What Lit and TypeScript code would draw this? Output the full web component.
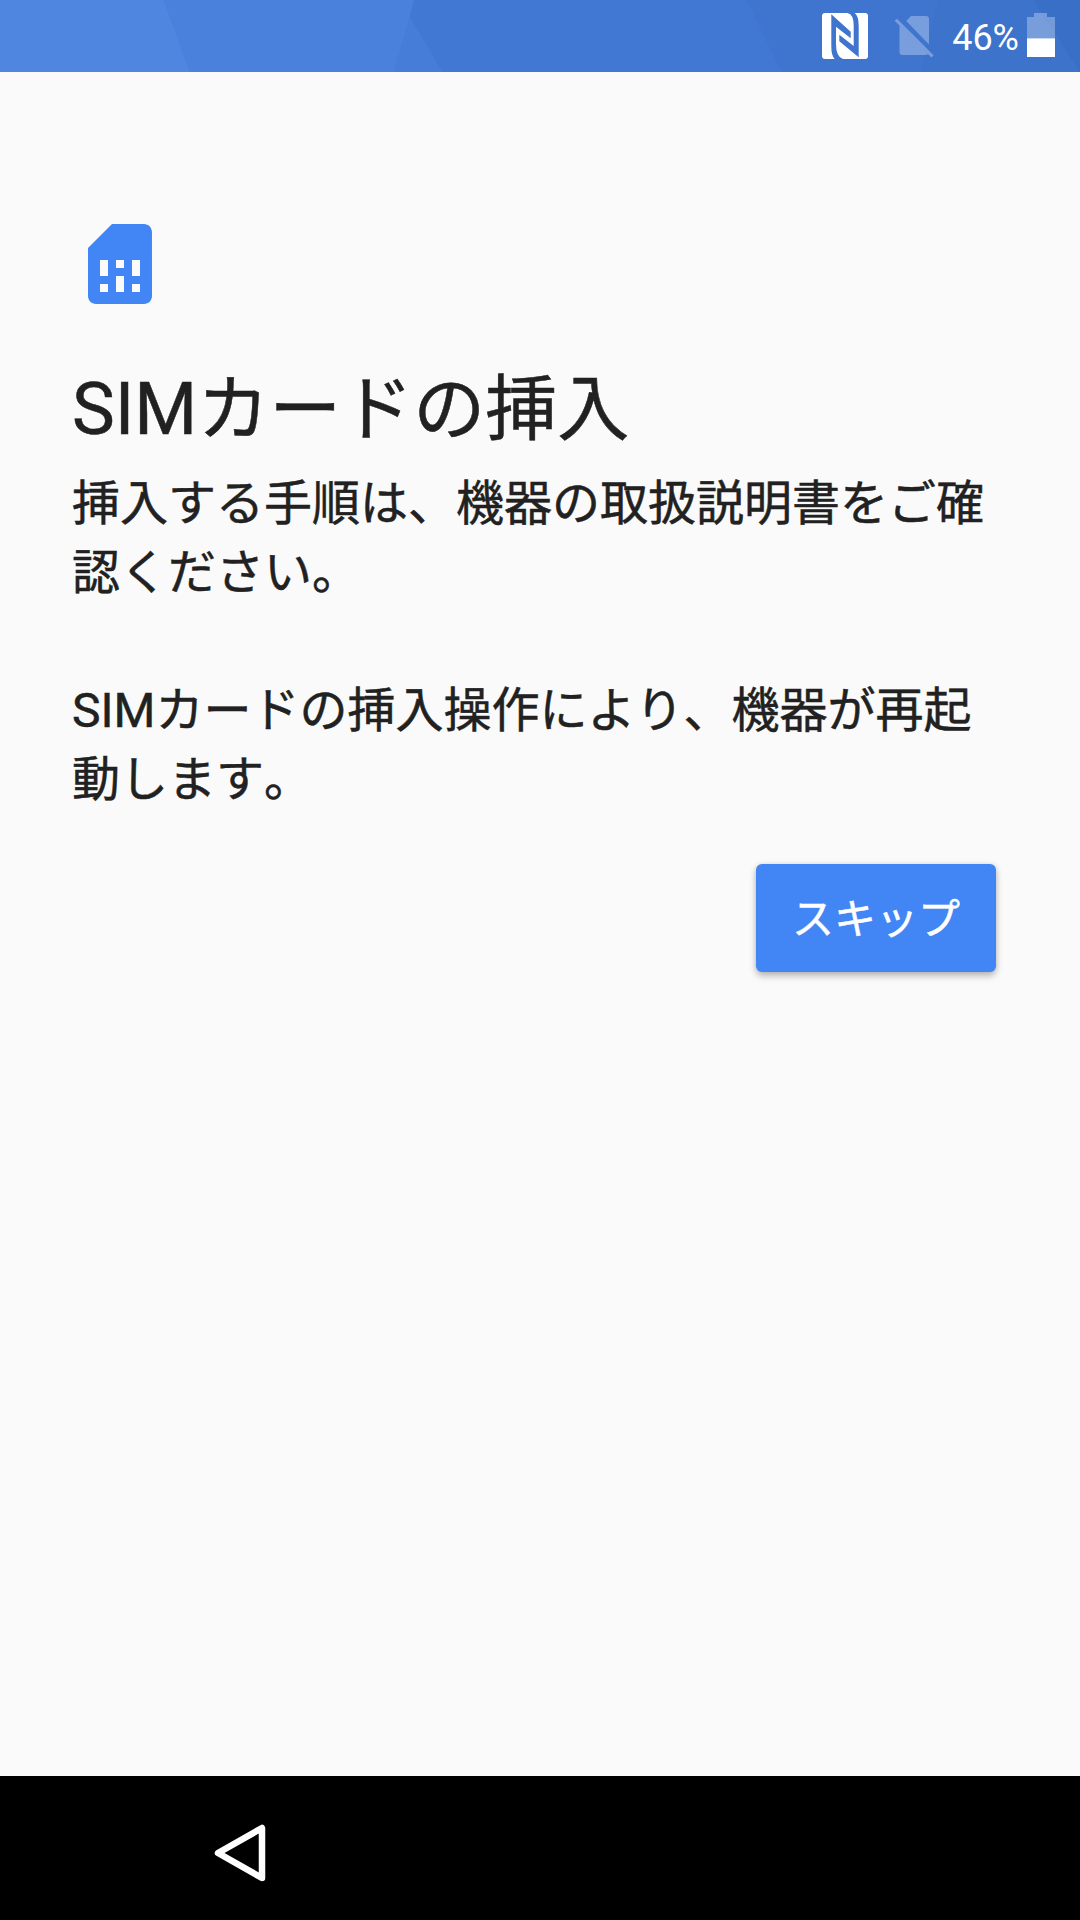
import { LitElement, html, css } from "lit";
import { customElement, property } from "lit/decorators.js";

@customElement("status-bar")
class StatusBar extends LitElement {
  @property() battery = "46%";

  static styles = css`
    :host { display: block; }
    .bar {
      position: relative;
      height: 72px;
      overflow: hidden;
      background: #4f86e0;
    }
    .backdrop { position: absolute; inset: 0; display: block; }
    .tray {
      position: relative;
      display: flex;
      justify-content: flex-end;
      height: 72px;
      padding-right: 25px;
    }
    .tray svg { display: block; flex: none; }
    .nfc { margin-right: 26px; }
    .sim { margin-right: 18px; }
    .level {
      font: 36px/72px Roboto, sans-serif;
      color: #fff;
      margin: 2px 8px 0 0;
    }
  `;

  render() {
    return html`
      <div class="bar">
        <svg class="backdrop" width="1080" height="72" viewBox="0 0 1080 72">
          <path fill="#4a81dc" d="M163.5 0H1080V72H189.500z" />
          <path fill="#467dd9" d="M414 0H1080V72H394z" />
          <path fill="#4178d3" d="M414 0H1080V72H442.500L410 17z" />
          <path fill="#3f75cf" d="M746.500 0H1080V72H782z" />
          <path fill="#3d73cb" d="M938.500 0H1080V72H920z" />
          <path fill="#396fc6" d="M1033 0H1080V72z" />
        </svg>
        <div class="tray">
          <svg class="nfc" width="46" height="72" viewBox="0 0 46 72">
            <rect y="13" width="46" height="46" rx="3" fill="#fff" />
            <path fill="#3f75cf" d="M9.300 14.300L28.700 31.700V38.300L14 26.700V44Q14 57 21 59H12.700Q9.300 56 9.300 46zM36.700 57.300L17.300 41.300V34.700L31.700 46V26Q31.700 14 25.500 13H32.700Q36.700 16 36.700 26z" />
          </svg>
          <svg class="sim" width="40" height="72" viewBox="0 0 40 72" fill="#fff" fill-opacity=".3">
            <path d="M12.300 21L17 16H32Q35 16 35 19V44.500z" />
            <path d="M3 18.700L39.700 55.300L37.300 57.600L34 54.300Q33 55 31 55H8.500Q5.500 55 5.500 52V25.600L.600 20.800z" />
          </svg>
          <span class="level">${this.battery}</span>
          <svg width="28" height="72" viewBox="0 0 28 72">
            <path fill="#fff" fill-opacity=".3" d="M0 17H7V13H20V17H28V38.300H0z" />
            <path fill="#fff" d="M0 38.300H28V57H0z" />
          </svg>
        </div>
      </div>
    `;
  }
}

@customElement("nav-bar")
class NavBar extends LitElement {
  static styles = css`
    :host { display: block; }
    .bar {
      display: flex;
      align-items: center;
      height: 144px;
      padding-left: 204px;
      padding-top: 10px;
      box-sizing: border-box;
      background: #000;
    }
    svg { display: block; }
  `;

  render() {
    return html`
      <div class="bar">
        <svg width="72" height="72" viewBox="0 0 72 72">
          <path d="M14 36L58 11V61z" fill="none" stroke="#fff" stroke-width="6.500" stroke-linejoin="round" />
        </svg>
      </div>
    `;
  }
}

@customElement("app-root")
class AppRoot extends LitElement {
  static styles = css`
    :host { display: block; }
    .screen {
      display: flex;
      flex-direction: column;
      width: 1080px;
      height: 1920px;
      overflow: hidden;
      background: #fafafa;
      color: #212121;
      font-family: Roboto, "Noto Sans CJK JP", sans-serif;
      font-kerning: none;
      -webkit-text-stroke: 0.5px currentColor;
    }
    status-bar { -webkit-text-stroke: 0; }
    .content {
      flex: 1;
      display: flex;
      flex-direction: column;
      padding: 144px 84px 0 72px;
    }
    .icon { display: block; }
    .title {
      margin: 46px 0 0;
      font-size: 72px;
      font-weight: 400;
      line-height: 104px;
      white-space: nowrap;
    }
    .body {
      margin: 7px 0 0;
      font-size: 48px;
      line-height: 69px;
      white-space: pre-line;
    }
    .skip {
      align-self: flex-end;
      width: 240px;
      height: 108px;
      margin: 50px 0 0;
      padding: 3px 0 0;
      border: 0;
      border-radius: 6px;
      background: #4285f4;
      color: #fff;
      font-family: inherit;
      font-size: 42px;
      line-height: 105px;
      box-shadow: 0 4px 7px rgba(0, 0, 0, 0.26), 0 0 4px rgba(0, 0, 0, 0.1);
    }
  `;

  render() {
    return html`
      <div class="screen">
        <status-bar></status-bar>
        <main class="content">
          <svg class="icon" width="96" height="96" viewBox="0 0 24 24" fill="#4285f4">
            <path d="M19.990 4c0-1.100-.890-2-1.990-2h-8L4 8v12c0 1.100.900 2 2 2h12.010c1.100 0 1.990-.900 1.990-2l-.010-16zM9 19H7v-2h2v2zm8 0h-2v-2h2v2zm-8-4H7v-4h2v4zm4 4h-2v-4h2v4zm0-6h-2v-2h2v2zm4 2h-2v-4h2v4z" />
          </svg>
          <h1 class="title">SIMカードの挿入</h1>
          <p class="body">${"挿入する手順は、機器の取扱説明書をご確\n認ください。\n\nSIMカードの挿入操作により、機器が再起\n動します。"}</p>
          <button class="skip">スキップ</button>
        </main>
        <nav-bar></nav-bar>
      </div>
    `;
  }
}
